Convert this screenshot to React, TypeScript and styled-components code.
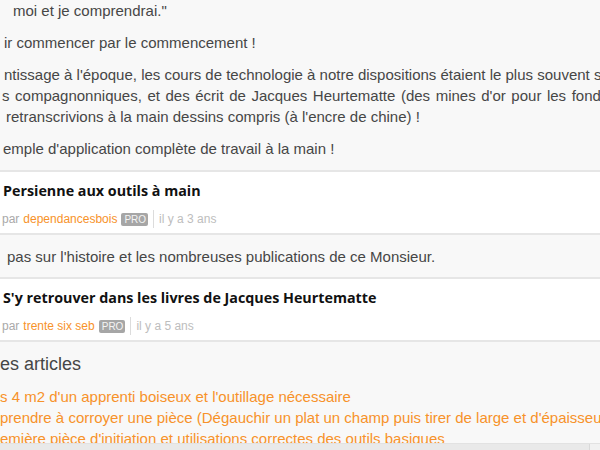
import styled, { createGlobalStyle } from "styled-components"

const GlobalStyle = createGlobalStyle`
    html, body {
        margin: 0;
        padding: 0;
        background: #f8f8f8;
    }
    body {
        font-family: "Liberation Sans", Arial, sans-serif;
    }
`

const Colors = {
    Text: "#464646",
    Title: "#111111",
    Orange: "#f7922a",
    Muted: "#a9a9a9",
    Light: "#bdbdbd",
    Border: "#e6e6e6",
    White: "#ffffff",
    Page: "#f8f8f8",
}

interface Story {
    title: string
    author: string
    age: string
}

const stories: Story[] = [
    { title: "Persienne aux outils à main", author: "dependancesbois", age: "il y a 3 ans" },
    { title: "S'y retrouver dans les livres de Jacques Heurtematte", author: "trente six seb", age: "il y a 5 ans" },
]

const articles = [
    "s 4 m2 d'un apprenti boiseux et l'outillage nécessaire",
    "prendre à corroyer une pièce (Dégauchir un plat un champ puis tirer de large et d'épaisseur)",
    "emière pièce d'initiation et utilisations correctes des outils basiques",
]

function StoryCard({ story }: { story: Story }) {
    return (
        <Card>
            <CardTitle>{story.title}</CardTitle>
            <Meta>
                <span>par</span>
                <Author>{story.author}</Author>
                <Badge>PRO</Badge>
                <Divider />
                <Age>{story.age}</Age>
            </Meta>
        </Card>
    )
}

function App() {
    return (
        <>
            <GlobalStyle />
            <Viewport>
                <Scroller>
                    <TextSection>
                        <Para $shift={13}>moi et je comprendrai."</Para>
                        <Para $shift={4}>ir commencer par le commencement !</Para>
                        <Block>
                            <Line $shift={4}>
                                ntissage à l'époque, les cours de technologie à notre dispositions étaient le plus souvent sous
                            </Line>
                            <Line $shift={2} $spread>
                                s compagnonniques, et des écrit de Jacques Heurtematte (des mines d'or pour les fondamentaux)
                            </Line>
                            <Line $shift={6}>retranscrivions à la main dessins compris (à l'encre de chine) !</Line>
                        </Block>
                        <Para $shift={3}>emple d'application complète de travail à la main !</Para>
                    </TextSection>

                    <StoryCard story={stories[0]} />

                    <Comment>
                        <Para $shift={7}>pas sur l'histoire et les nombreuses publications de ce Monsieur.</Para>
                    </Comment>

                    <StoryCard story={stories[1]} />

                    <Related>
                        <RelatedTitle>es articles</RelatedTitle>
                        <LinkList>
                            {articles.map((a) => (
                                <ArticleLink key={a}>{a}</ArticleLink>
                            ))}
                        </LinkList>
                    </Related>
                </Scroller>
                <ScrollBar>
                    <Thumb />
                </ScrollBar>
            </Viewport>
        </>
    )
}

export default App

const Viewport = styled.div`
    width: 600px;
    height: 450px;
    overflow: hidden;
    display: flex;
    flex-direction: column;
    background: ${Colors.Page};
`

const Scroller = styled.div`
    flex: 1;
    overflow: hidden;
`

const TextSection = styled.div`
    border-bottom: 2px solid ${Colors.Border};
`

const Para = styled.p<{ $shift: number }>`
    margin: 0 0 11px ${({ $shift }) => `${$shift}px`};
    font-size: 15px;
    line-height: 21px;
    color: ${Colors.Text};
    white-space: nowrap;
`

const Block = styled.div`
    margin: 0 0 11px;
`

const Line = styled.div<{ $shift: number; $spread?: boolean }>`
    margin-left: ${({ $shift }) => `${$shift}px`};
    font-size: 15px;
    line-height: 21px;
    color: ${Colors.Text};
    white-space: nowrap;
    word-spacing: ${({ $spread }) => ($spread ? "1.4px" : "0")};
`

const Card = styled.div`
    background: ${Colors.White};
    border-bottom: 2px solid ${Colors.Border};
    padding: 9px 0 5px 3px;
    display: flex;
    flex-direction: column;
    gap: 9px;
`

const CardTitle = styled.div`
    font-family: "Open Sans", "Liberation Sans", sans-serif;
    font-weight: 700;
    font-size: 14.3px;
    line-height: 20px;
    color: ${Colors.Title};
    white-space: nowrap;
`

const Meta = styled.div`
    display: flex;
    align-items: center;
    gap: 4px;
    margin-left: -1px;
    font-size: 12px;
    line-height: 18px;
    color: ${Colors.Muted};
`

const Author = styled.span`
    color: ${Colors.Orange};
`

const Badge = styled.span`
    background: #a6a6a6;
    color: #f4f4f4;
    font-size: 10px;
    line-height: 13px;
    padding: 0 2px 0 3px;
    border-radius: 2px;
`

const Divider = styled.span`
    width: 1px;
    height: 18px;
    background: #dcdcdc;
    margin: 0 1px;
`

const Age = styled.span`
    color: ${Colors.Light};
`

const Comment = styled.div`
    padding: 11px 0 0;
    border-bottom: 2px solid ${Colors.Border};
    & > p {
        margin-bottom: 10px;
    }
`

const Related = styled.div`
    padding: 9px 0 0;
`

const RelatedTitle = styled.h3`
    margin: 0 0 9px;
    font-weight: 400;
    font-size: 18px;
    line-height: 26px;
    color: ${Colors.Text};
    white-space: nowrap;
`

const LinkList = styled.div`
    display: flex;
    flex-direction: column;
`

const ArticleLink = styled.a`
    font-size: 15px;
    line-height: 21px;
    color: ${Colors.Orange};
    white-space: nowrap;
    cursor: pointer;
`

const ScrollBar = styled.div`
    height: 6px;
    flex-shrink: 0;
    display: flex;
    background: #f1f1f1;
    border-top: 1px solid #e2e2e2;
`

const Thumb = styled.div`
    width: 589px;
    background: #e9e9e9;
    border-right: 1px solid #d9d9d9;
`
